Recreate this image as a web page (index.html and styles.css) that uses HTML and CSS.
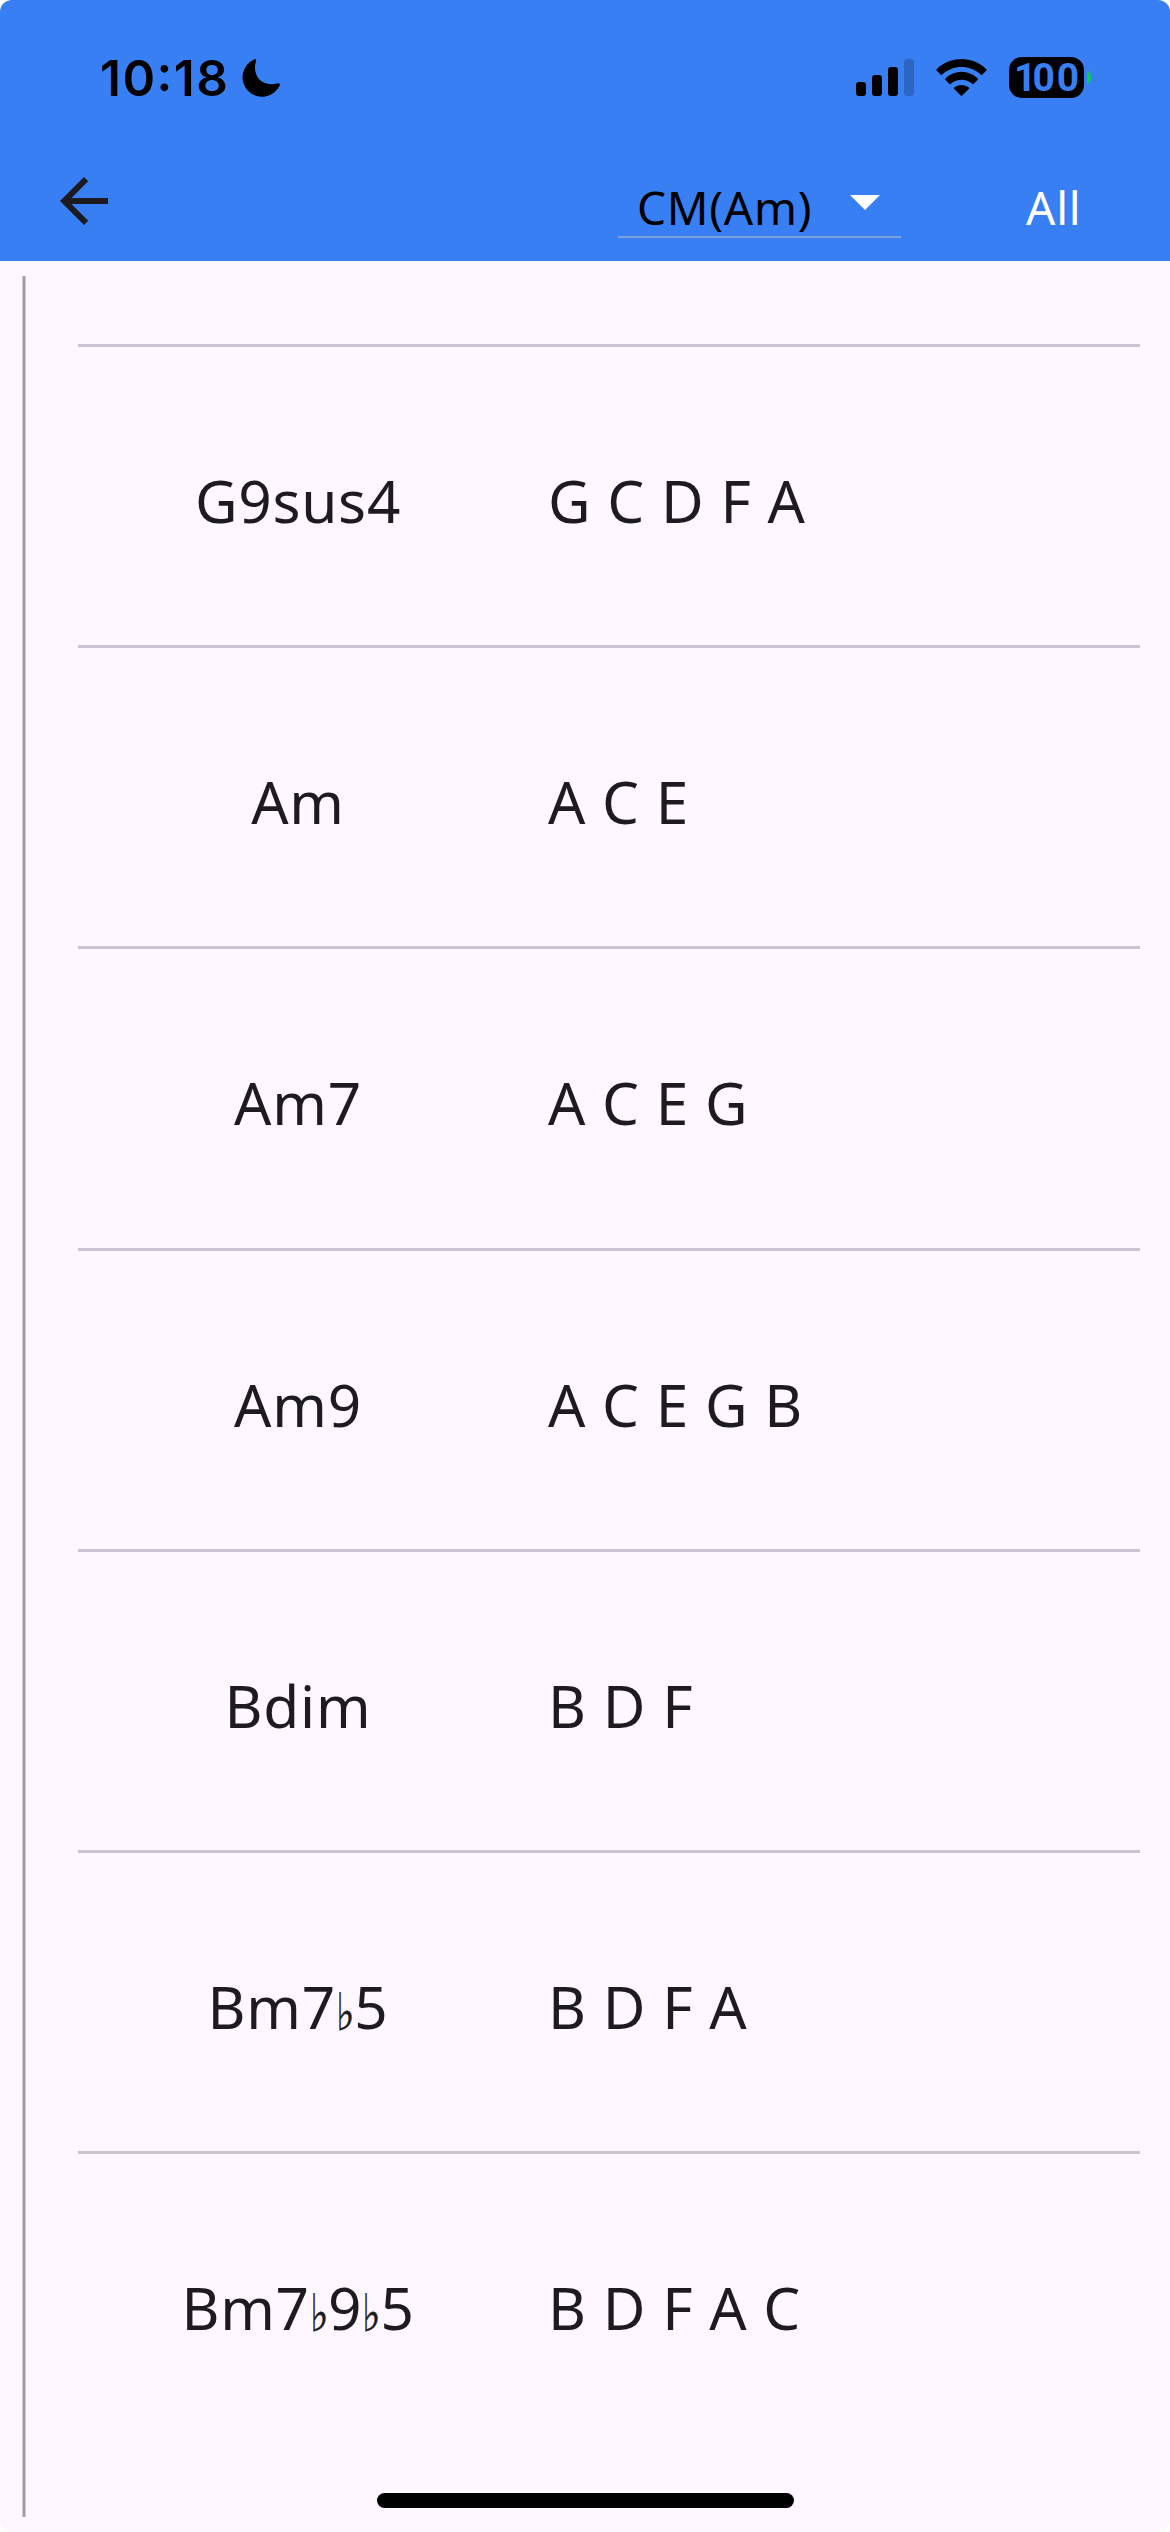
FILE: index.html
```html
<!DOCTYPE html>
<html lang="en">
<head>
<meta charset="utf-8">
<title>Chords</title>
<link rel="stylesheet" href="styles.css">
</head>
<body>
<div class="screen">
  <header class="header">
    <div class="status">
      <span class="time">10:18</span>
      <svg class="moon" viewBox="0 0 39 39"><path d="M13 .5Q15.500-.8 15 2C11 15 19 28.500 36 24.500Q39.500 23.600 38.700 26.500A19.500 19.500 0 1 1 13 .5Z"/></svg>
      <svg class="signal" viewBox="0 0 58 37"><rect y="23" width="10" height="14" rx="3"/><rect x="16" y="16" width="10" height="21" rx="3"/><rect x="32" y="8" width="10" height="29" rx="3"/><rect x="48" width="10" height="37" rx="3" opacity=".2"/></svg>
      <svg class="wifi" viewBox="0 0 51 37"><path d="M.6 10.200C14.500-3.400 36.500-3.400 50.400 10.200Q51 11 50.400 11.600L46.200 15.700Q45.500 16.200 44.800 15.600C34 5.500 17 5.500 6.200 15.600Q5.500 16.200 4.800 15.700L.6 11.600Q0 11 .6 10.200Z"/><path d="M9.300 19.400C18.400 10.600 32.600 10.600 41.700 19.400Q42.300 20.100 41.700 20.700L37.500 24.900Q36.900 25.400 36.200 24.800C30 19.500 21 19.500 14.800 24.800Q14.100 25.400 13.500 24.900L9.300 20.700Q8.700 20.100 9.300 19.400Z"/><path d="M18.200 28.600C22.300 25.100 28.700 25.100 32.800 28.600Q33.400 29.300 32.800 30L26.200 36.600Q25.500 37.200 24.800 36.600L18.200 30Q17.600 29.300 18.200 28.600Z"/></svg>
      <span class="battery"><span class="battery-one">1</span>00</span>
      <span class="battery-tip"></span>
    </div>
    <nav class="toolbar">
      <svg class="back" viewBox="0 0 24 24"><path d="M20 11H7.830l5.590-5.590L12 4l-8 8 8 8 1.410-1.410L7.830 13H20v-2z"/></svg>
      <div class="picker"><span class="picker-label">CM(Am)</span><svg class="caret" viewBox="0 0 30 15"><path d="M0 0h30L15 15z"/></svg></div>
      <span class="all">All</span>
    </nav>
  </header>
  <main class="content">
    <div class="rail"></div>
    <ul class="chords">
      <li class="chord"><span class="name">G9sus4</span><span class="notes">G C D F A</span></li>
      <li class="chord"><span class="name">Am</span><span class="notes">A C E</span></li>
      <li class="chord"><span class="name">Am7</span><span class="notes">A C E G</span></li>
      <li class="chord"><span class="name">Am9</span><span class="notes">A C E G B</span></li>
      <li class="chord"><span class="name">Bdim</span><span class="notes">B D F</span></li>
      <li class="chord"><span class="name">Bm7<span class="flat">♭</span>5</span><span class="notes">B D F A</span></li>
      <li class="chord"><span class="name">Bm7<span class="flat">♭</span>9<span class="flat">♭</span>5</span><span class="notes">B D F A C</span></li>
    </ul>
  </main>
  <div class="home"></div>
</div>
</body>
</html>
```
FILE: styles.css
```css
* { box-sizing: border-box; }
body { margin: 0; background: #fff; }
svg { display: block; flex: none; }
.screen { position: relative; width: 1170px; height: 2532px; overflow: hidden; border-radius: 12px; background: #fef7ff; font-family: "Noto Sans", sans-serif; color: #1d1b20; display: flex; flex-direction: column; }
.header { height: 261px; flex: none; background: #377ff3; }
.status { height: 156px; display: flex; align-items: flex-start; padding: 57px 0 0 100px; color: #000; }
.time { width: 141px; font: 600 49.500px/42px Inter, sans-serif; font-feature-settings: "calt" 1; letter-spacing: 1.500px; white-space: nowrap; }
.moon { width: 39px; height: 39px; margin-top: 2px; }
.signal { width: 58px; height: 37px; margin: 2px 22px 0 576px; }
.wifi { width: 51px; height: 37px; margin: 2px 22px 0 0; }
.battery { width: 75px; height: 41px; padding-left: 5px; border-radius: 13px; background: #000; color: #377ff3; font: 700 39px/42px Roboto, sans-serif; letter-spacing: 2px; white-space: nowrap; }
.battery-one { letter-spacing: -4px; }
.battery-tip { width: 4px; height: 13px; margin: 14px 0 0 3px; background: #06cf4c; border-radius: 0 4px 4px 0 / 0 6.500px 6.500px 0; }
.toolbar { height: 105px; display: flex; align-items: flex-start; padding-left: 48px; font-size: 46px; line-height: 64px; letter-spacing: .75px; }
.back { width: 72px; height: 72px; margin-top: 9px; fill: #1d1b20; }
.picker { width: 283px; height: 62px; margin: 20px 0 0 498px; padding-left: 19px; border-bottom: 2px solid #7b9fdc; display: flex; color: #000; }
.picker-label { width: 213px; margin-top: -1px; }
.caret { width: 30px; height: 15px; margin-top: 19px; fill: #fff; }
.all { margin: 19px 0 0 125px; color: #fff; }
.content { flex: 1; display: flex; padding-top: 15px; }
.rail { width: 4px; height: 2241px; margin-left: 22px; background: #9e9e9e; border: solid #cdc9ce; border-width: 0 1px; }
.chords { list-style: none; margin: 68px 0 0 52px; padding: 0; width: 1062px; }
.chord { height: 301.200px; border-top: 3px solid #cac4d0; display: flex; align-items: center; padding-top: 8px; font-size: 58.500px; letter-spacing: .75px; white-space: nowrap; }
.name { width: 440px; text-align: center; }
.flat { display: inline-block; width: 18.200px; font: 52px/50px "DejaVu Serif", serif; letter-spacing: 0; -webkit-text-stroke: .5px #1d1b20; transform: translateY(.5px) scaleX(.76); transform-origin: left; }
.notes { margin-left: 30px; }
.home { position: absolute; left: 377px; top: 2493px; width: 417px; height: 15px; border-radius: 8px; background: #000; }
```
